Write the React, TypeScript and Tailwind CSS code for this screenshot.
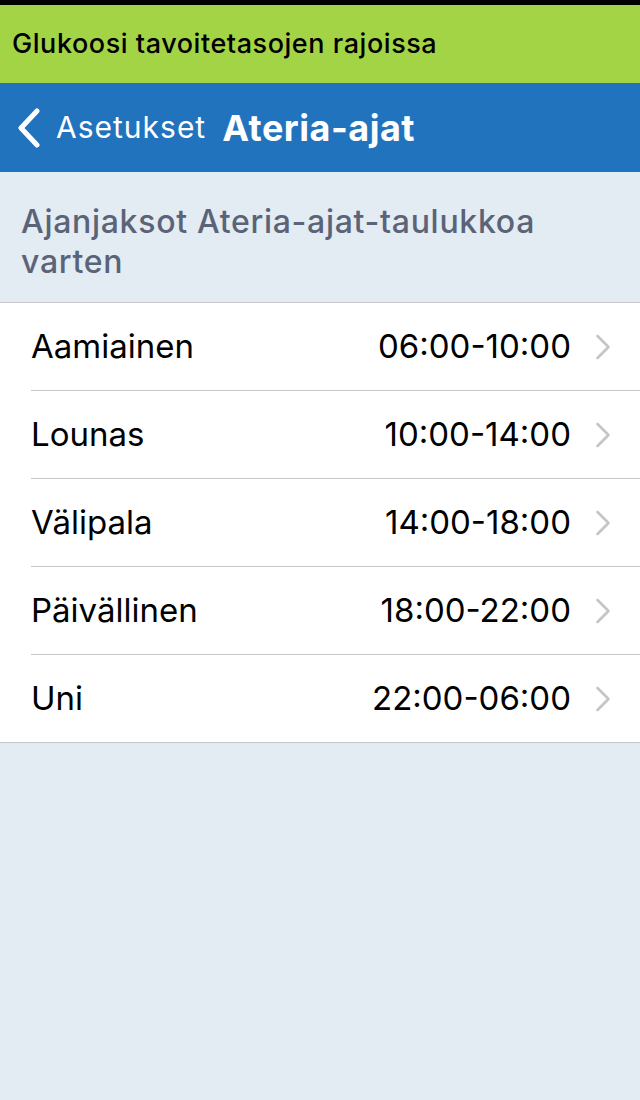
import { ChevronRight } from "lucide-react";

const meals = [
  { name: "Aamiainen", time: "06:00-10:00" },
  { name: "Lounas", time: "10:00-14:00" },
  { name: "Välipala", time: "14:00-18:00" },
  { name: "Päivällinen", time: "18:00-22:00" },
  { name: "Uni", time: "22:00-06:00" },
];

export default function App() {
  return (
    <div className="flex min-h-[1100px] w-[640px] flex-col bg-[#e3ebf3] font-['Inter',sans-serif]">
      <div className="h-[5px] bg-black" />
      <div className="flex h-[78px] items-center bg-[#a3d445] px-3">
        <span className="text-[27px] font-medium tracking-[0.55px] text-black">
          Glukoosi tavoitetasojen rajoissa
        </span>
      </div>
      <div className="flex h-[89px] items-center bg-[#2273bd] px-4 text-white">
        <svg width="26" height="40" viewBox="0 0 26 40" fill="none" aria-hidden="true">
          <path d="M21 3L5 20l16 17" stroke="white" strokeWidth="5" strokeLinecap="round" strokeLinejoin="round" />
        </svg>
        <span className="ml-[14px] text-[30px] tracking-[1px]">Asetukset</span>
        <span className="ml-[16px] text-[36px] font-bold tracking-[0.5px]">Ateria-ajat</span>
      </div>
      <div className="px-[21px] pt-[30px] pb-[20px] text-[32px] font-medium leading-[40px] tracking-[0.7px] text-[#5a6377]">
        Ajanjaksot Ateria-ajat-taulukkoa varten
      </div>
      <ul className="border-y border-[#c8c8cc] bg-white">
        {meals.map((m, i) => {
          const last = i === meals.length - 1;
          return (
            <li key={m.name} className="pl-[31px]">
              <div
                className={`flex items-center pr-[15px] ${
                  last ? "h-[87px]" : "h-[88px] border-b border-[#c8c8cc]"
                }`}
              >
                <span className="flex-1 text-[33px] text-black">{m.name}</span>
                <span className="text-[33px] text-black">{m.time}</span>
                <ChevronRight className="ml-[10px] text-[#c4c4c9]" size={44} strokeWidth={1.4} />
              </div>
            </li>
          );
        })}
      </ul>
    </div>
  );
}
